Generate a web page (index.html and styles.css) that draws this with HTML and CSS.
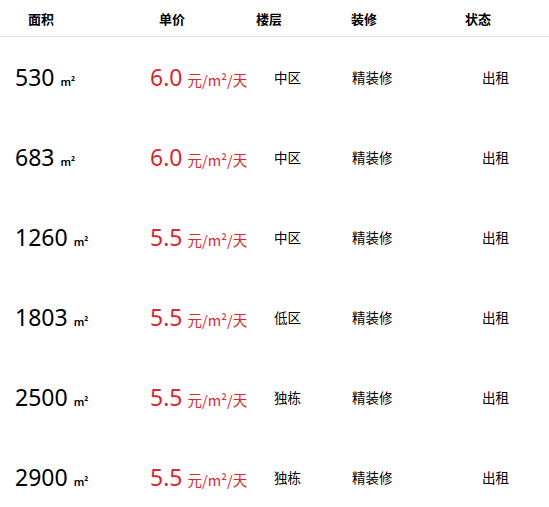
FILE: index.html
```html
<!DOCTYPE html>
<html lang="zh">
<head>
<meta charset="utf-8">
<link rel="stylesheet" href="styles.css">
</head>
<body>
<div class="list">
  <div class="head">
    <div class="h h1">面积</div>
    <div class="h h2">单价</div>
    <div class="h h3">楼层</div>
    <div class="h h4">装修</div>
    <div class="h h5">状态</div>
  </div>
  <div class="row"><div class="area">530<span class="unit">m²</span></div><div class="price">6.0<span class="punit">元/m²/天</span></div><div class="cell">中区</div><div class="cell">精装修</div><div class="cell">出租</div></div>
  <div class="row"><div class="area">683<span class="unit">m²</span></div><div class="price">6.0<span class="punit">元/m²/天</span></div><div class="cell">中区</div><div class="cell">精装修</div><div class="cell">出租</div></div>
  <div class="row"><div class="area">1260<span class="unit">m²</span></div><div class="price">5.5<span class="punit">元/m²/天</span></div><div class="cell">中区</div><div class="cell">精装修</div><div class="cell">出租</div></div>
  <div class="row"><div class="area">1803<span class="unit">m²</span></div><div class="price">5.5<span class="punit">元/m²/天</span></div><div class="cell">低区</div><div class="cell">精装修</div><div class="cell">出租</div></div>
  <div class="row"><div class="area">2500<span class="unit">m²</span></div><div class="price">5.5<span class="punit">元/m²/天</span></div><div class="cell">独栋</div><div class="cell">精装修</div><div class="cell">出租</div></div>
  <div class="row"><div class="area">2900<span class="unit">m²</span></div><div class="price">5.5<span class="punit">元/m²/天</span></div><div class="cell">独栋</div><div class="cell">精装修</div><div class="cell">出租</div></div>
</div>
</body>
</html>
```
FILE: styles.css
```css
html, body {
  margin: 0;
  padding: 0;
  background: #fff;
}
body {
  font-family: "Noto Sans", "Noto Sans CJK SC", sans-serif;
  color: #000;
}
.head {
  display: flex;
  height: 36px;
  align-items: center;
  border-bottom: 1px solid #e6e6e6;
}
.h {
  font-family: "Noto Sans CJK SC", sans-serif;
  font-size: 13px;
  font-weight: bold;
  text-align: center;
}
.h1 { width: 82px; }
.h2 { width: 120px; margin-left: 30px; }
.h3 { width: 74px; }
.h4 { width: 116px; }
.h5 { width: 112px; }
.row {
  display: grid;
  grid-template-columns: 135px 124px 78px 130px 1fr;
  padding-left: 15px;
  height: 80px;
  align-items: center;
}
.area {
  font-size: 23px;
}
.unit {
  font-size: 11px;
  font-weight: 600;
  margin-left: 6px;
}
.price {
  font-size: 23px;
  color: #d9262f;
}
.punit {
  font-family: "Noto Sans CJK SC", sans-serif;
  font-size: 14.5px;
  margin-left: 5px;
}
.cell {
  font-family: "Noto Sans CJK SC", sans-serif;
  font-size: 13.5px;
}
```
